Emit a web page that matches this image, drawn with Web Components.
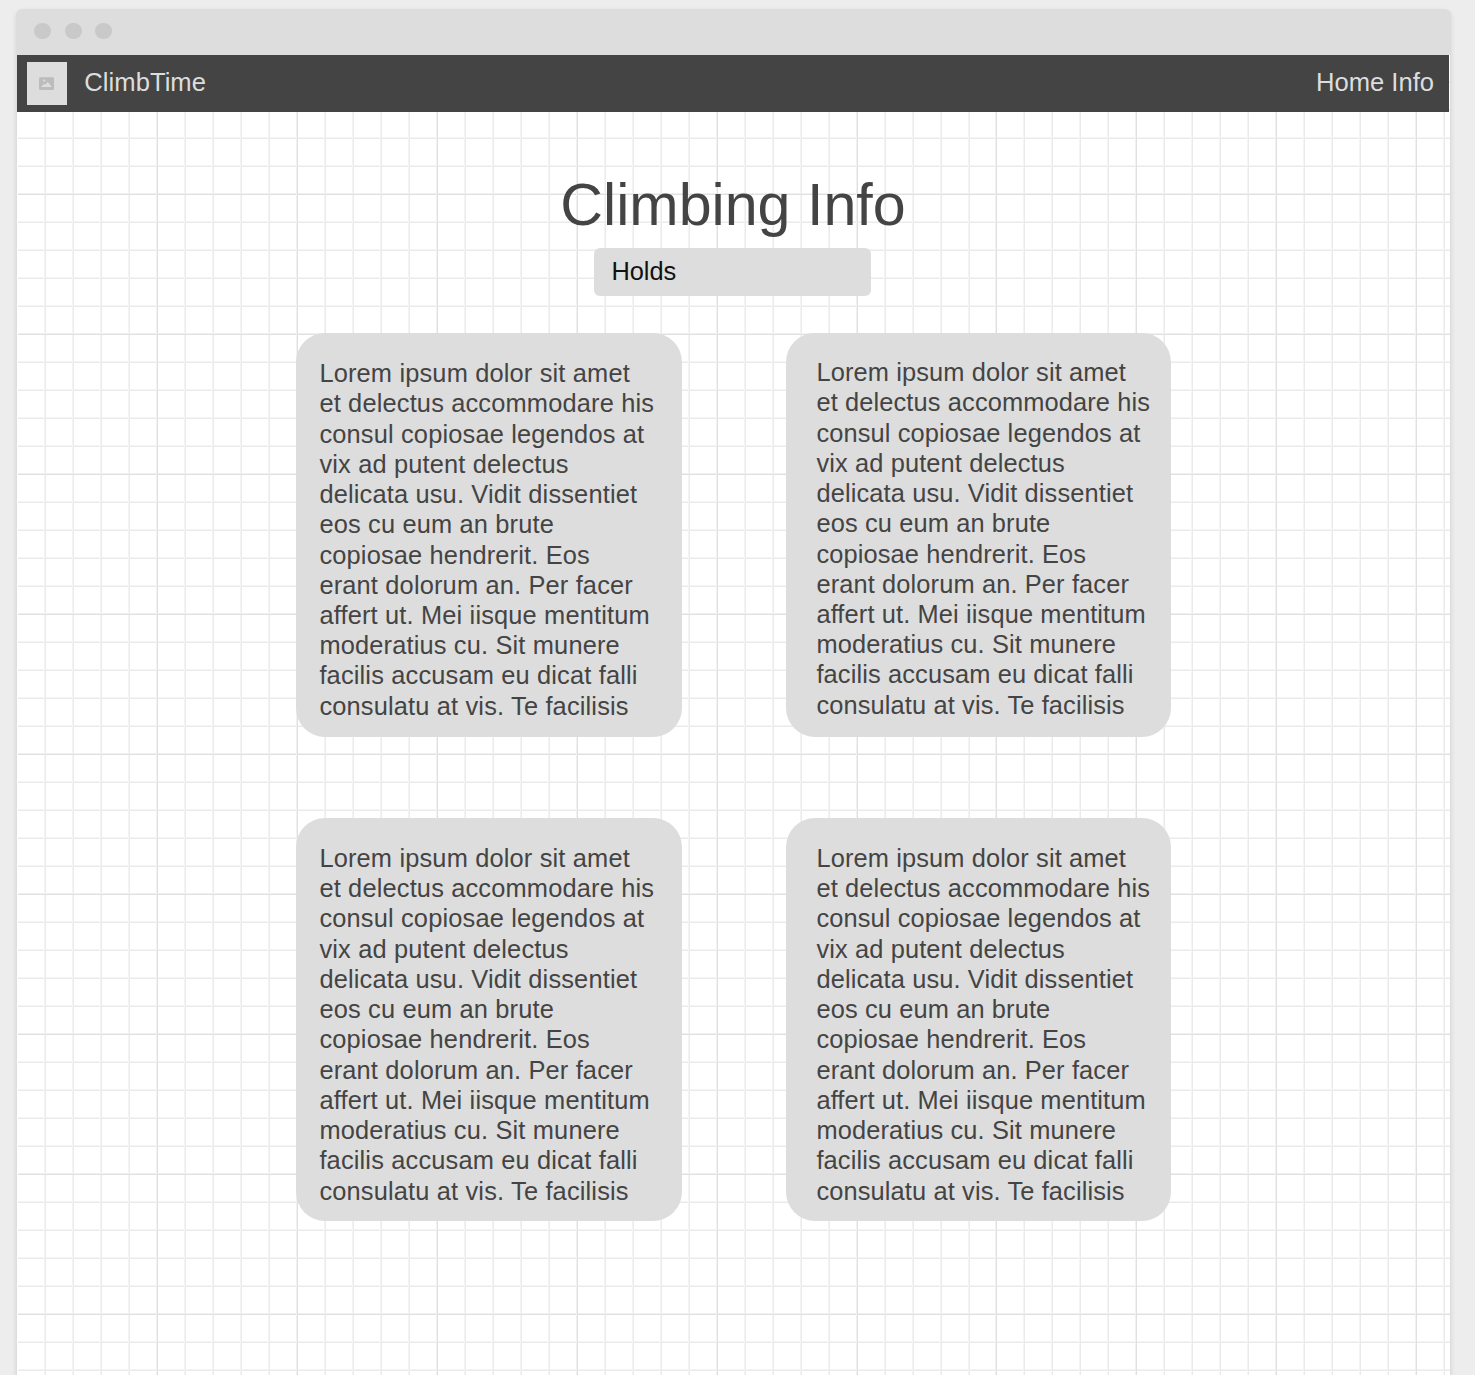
<!DOCTYPE html>
<html lang="en">
<head>
<meta charset="utf-8">
<title>ClimbTime</title>
<style>
html,body{margin:0;height:100%;overflow:hidden}
body{background:#ededed;font-family:"Liberation Sans",Arial,sans-serif;color:#444}
</style>
</head>
<body>
<climb-window>
  <climb-nav slot="nav" brand="ClimbTime">Home Info</climb-nav>
  <climb-title>Climbing Info</climb-title>
  <climb-select>Holds</climb-select>
  <climb-grid>
    <climb-card></climb-card><climb-card class="right"></climb-card>
    <climb-card class="low"></climb-card><climb-card class="right low"></climb-card>
  </climb-grid>
</climb-window>
<script>
const define = (name, html) => customElements.define(name, class extends HTMLElement {
  constructor() {
    super();
    this.attachShadow({ mode: 'open' }).innerHTML = typeof html === 'function' ? html(this) : html;
  }
});

define('climb-window', `<style>
:host{display:flex;flex-direction:column;box-sizing:border-box;height:100vh;padding:9px 24px 0 16px}
.frame{flex:1;display:flex;flex-direction:column;border-radius:7px 7px 0 0;box-shadow:0 2px 5px rgba(0,0,0,.11);background:#ddd;min-height:0}
.bar{flex:none;height:46px;box-sizing:border-box;padding:13.5px 0 0 18px;display:flex;gap:13.5px;background:#ddd;border-radius:7px 7px 0 0}
.bar i{width:17px;height:16.5px;border-radius:50%;background:#c9c9c9}
.page,.page::after{background-color:#fff;
background-image:linear-gradient(90deg,#f1f1f1 1px,#e0e0e0 1px,#e0e0e0 2px,transparent 2px),linear-gradient(#f1f1f1 1px,#e0e0e0 1px,#e0e0e0 2px,transparent 2px),linear-gradient(90deg,#f4f4f4 1px,#ebebeb 1px,#ebebeb 2px,transparent 2px),linear-gradient(#f4f4f4 1px,#ebebeb 1px,#ebebeb 2px,transparent 2px);
background-size:140px 140px,140px 140px,28px 28px,28px 28px;
background-position:139px 0,0 138px,27px 0,0 26px}
.page{position:relative;isolation:isolate;flex:1;min-height:0;overflow:hidden;margin:0 1px;display:flex;flex-direction:column}
/* The second canvas tile starts one pixel early. */
.page::after{content:"";position:absolute;z-index:-1;inset:0 0 0 965px;background-position:13px 0,0 138px,13px 0,0 26px}
.page::before{content:"";position:absolute;z-index:-1;inset:0 auto 0 0;width:1px;background:#fff}
</style><div class="frame"><div class="bar"><i></i><i></i><i></i></div><div class="page"><slot name="nav"></slot><slot></slot></div></div>`);

define('climb-nav', el => `<style>
:host{display:flex;flex:none;box-sizing:border-box;height:57px;margin-right:1px;background:#444;color:#ddd;font-size:25.6px;line-height:30px;padding:7px 15px 0 10px}
.logo{width:40px;height:43px;background:#ddd;flex:none}
svg{display:block;margin:15px 0 0 12px}
.brand{margin:5px auto 0 17.3px;letter-spacing:.04px}.links{margin-top:5px}
</style><div class="logo"><svg width="15" height="13" viewBox="0 0 15 13"><rect y=".3" width="15" height="12.7" rx="1.2" fill="#bcbcbc"/><path d="M5.1 1.6 5.7 3 7 3.5 5.7 4.1 5.1 5.4 4.6 4.1 3.2 3.5 4.6 3Z" fill="#ddd"/><path d="M2.1 10 5 6.7 6.2 7.7 8.7 4.8 12.9 10Z" fill="#ddd"/></svg></div>
<span class="brand">${el.getAttribute('brand')}</span><span class="links"><slot></slot></span>`);

define('climb-title', `<style>
:host{display:block;flex:none;text-align:center;margin:58px 1px 0 0;height:78px;font-size:59.2px;line-height:70px}
</style><slot></slot>`);

define('climb-select', `<style>
:host{display:block;flex:none;box-sizing:border-box;width:277px;height:48px;margin-left:577px;border-radius:6px;background:#ddd;color:#111;font-size:25.4px;line-height:30px;padding:8px 0 0 17.4px}
</style><slot></slot>`);

define('climb-grid', `<style>
:host{display:grid;flex:none;grid-template-columns:386px 385px;grid-template-rows:404px 403px;gap:81px 104px;margin:37px 0 0 279px}
</style><slot></slot>`);

const lines = ['Lorem ipsum dolor sit amet','et delectus accommodare his','consul copiosae legendos at','vix ad putent delectus','delicata usu. Vidit dissentiet','eos cu eum an brute','copiosae hendrerit. Eos','erant dolorum an. Per facer','affert ut. Mei iisque mentitum','moderatius cu. Sit munere','facilis accusam eu dicat falli','consulatu at vis. Te facilisis'];
define('climb-card', `<style>
:host{display:block;box-sizing:border-box;background:#ddd;border-radius:29px;padding:25.13px 0 0 23.4px;font-size:25.4px;line-height:30.24px;letter-spacing:.165px;white-space:nowrap}
:host(.right){padding:24.13px 0 0 30.4px;letter-spacing:.13px}
:host(.low){padding-top:25px}
</style>${lines.map(t => `<div>${t}</div>`).join('')}`);
</script>
</body>
</html>
